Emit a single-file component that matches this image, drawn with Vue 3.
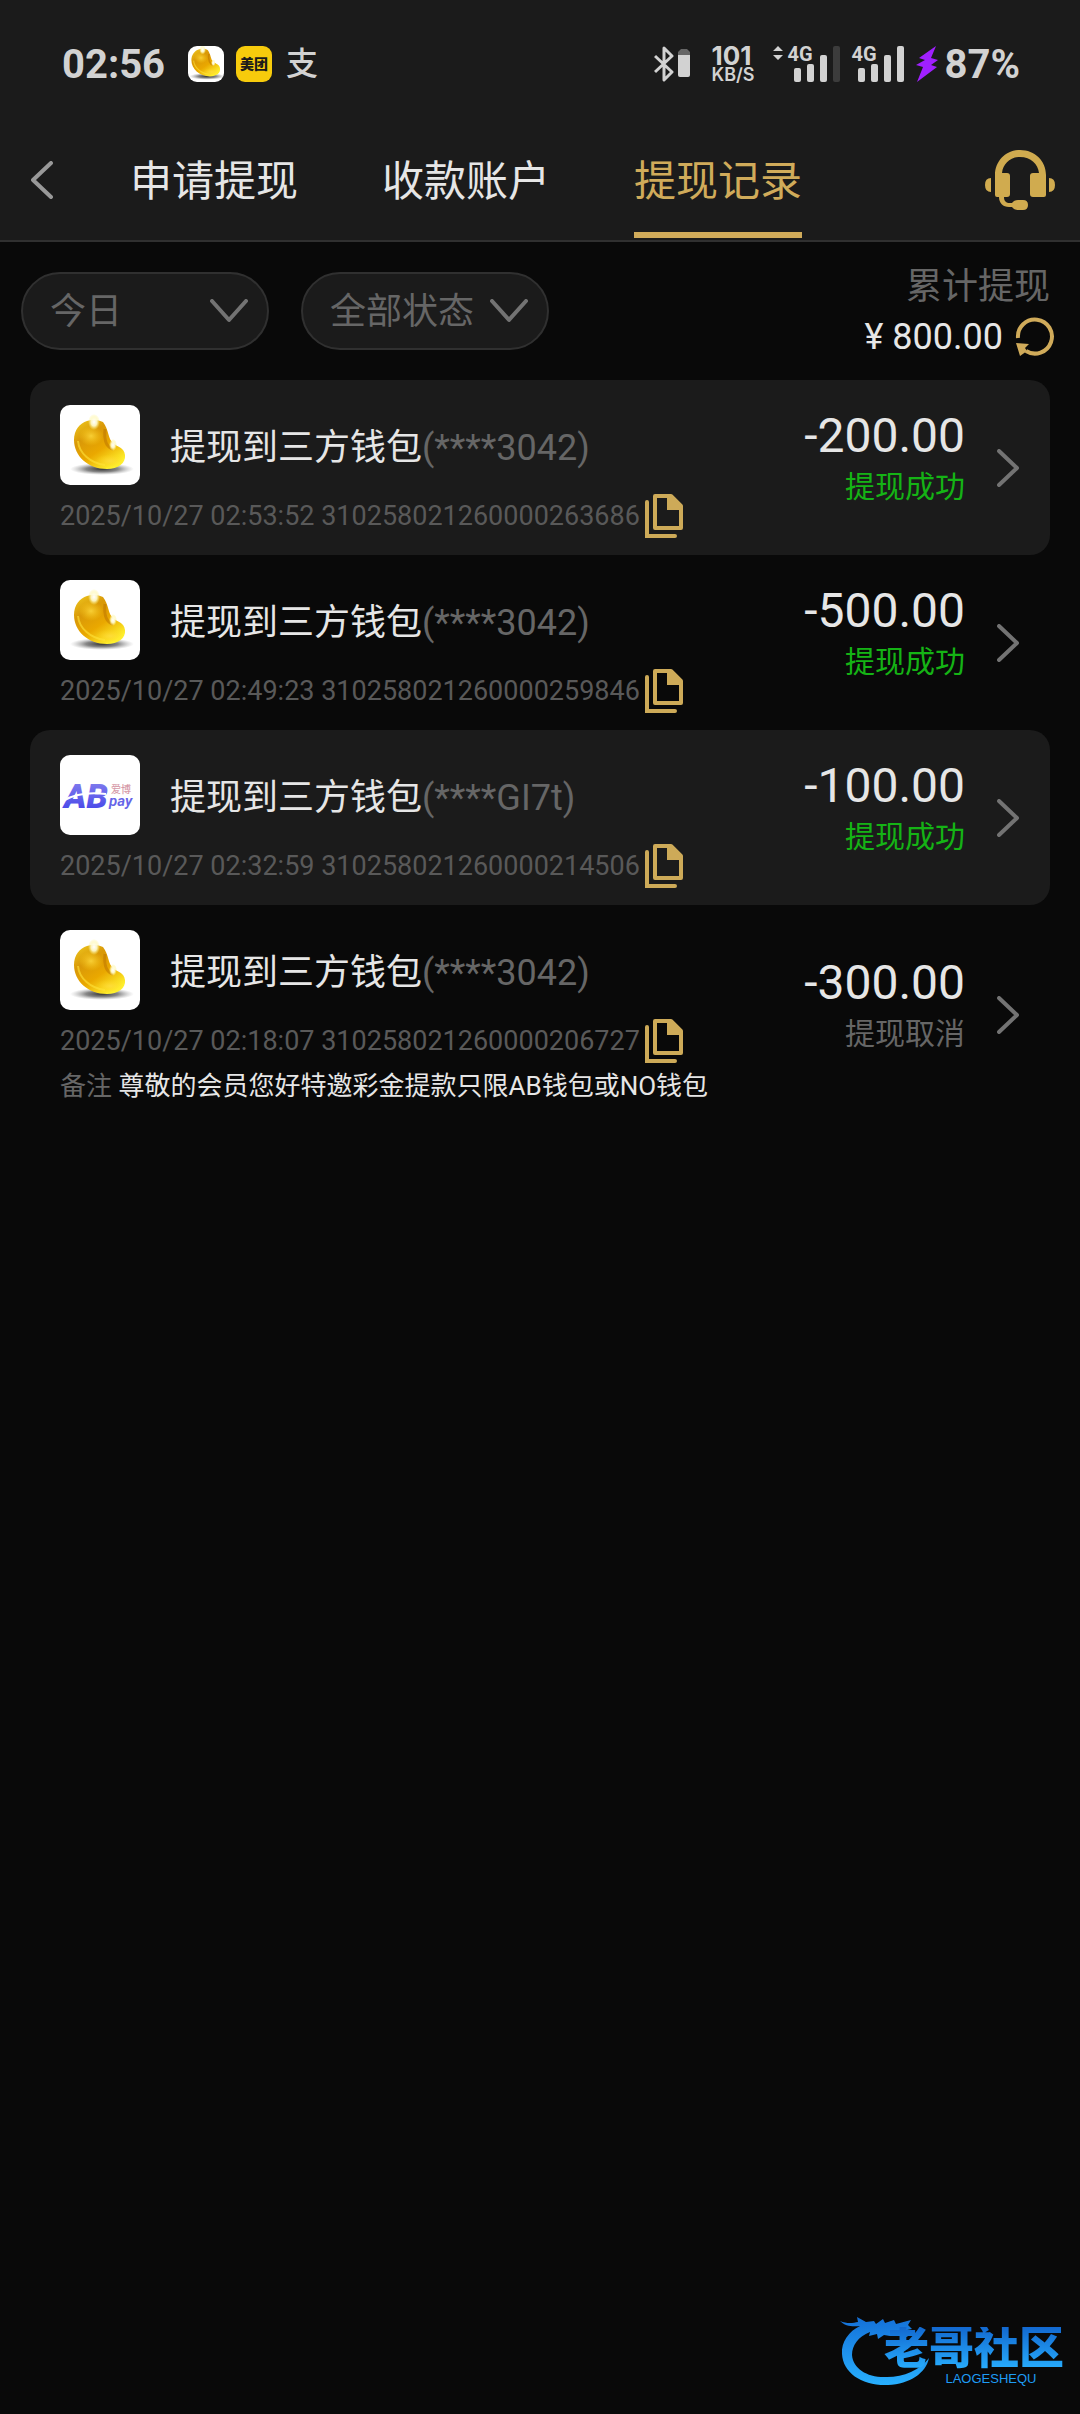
<script setup>
import { ref } from "vue";

const tabs = ["申请提现", "收款账户", "提现记录"];
const activeTab = ref("提现记录");

const dateRange = ref("今日");
const status = ref("全部状态");
const dateOptions = ["今日", "昨日", "近七日"];
const statusOptions = ["全部状态", "提现成功", "提现取消"];

const total = ref("800.00");

const records = ref([
  {
    id: "310258021260000263686",
    time: "2025/10/27 02:53:52",
    logo: "bean",
    account: "3042",
    amount: "-200.00",
    success: true,
  },
  {
    id: "310258021260000259846",
    time: "2025/10/27 02:49:23",
    logo: "bean",
    account: "3042",
    amount: "-500.00",
    success: true,
  },
  {
    id: "310258021260000214506",
    time: "2025/10/27 02:32:59",
    logo: "abpay",
    account: "GI7t",
    amount: "-100.00",
    success: true,
  },
  {
    id: "310258021260000206727",
    time: "2025/10/27 02:18:07",
    logo: "bean",
    account: "3042",
    amount: "-300.00",
    success: false,
    remark: "尊敬的会员您好特邀彩金提款只限AB钱包或NO钱包",
  },
]);

function copyId(id) {
  navigator.clipboard?.writeText(id);
}
</script>

<template>
  <div class="page">
    <!-- shared symbols -->
    <svg class="symbols" width="0" height="0" aria-hidden="true">
      <defs>
        <linearGradient id="beanFill" x1="0" y1="0" x2="0.7" y2="1">
          <stop offset="0" stop-color="#f0cc20" />
          <stop offset="0.35" stop-color="#d99808" />
          <stop offset="0.65" stop-color="#eaa800" />
          <stop offset="1" stop-color="#fff22e" />
        </linearGradient>
        <radialGradient id="beanGlow">
          <stop offset="0" stop-color="#ffdc40" stop-opacity="0.8" />
          <stop offset="1" stop-color="#ffd21a" stop-opacity="0" />
        </radialGradient>
        <radialGradient id="beanShine">
          <stop offset="0" stop-color="#ffffff" />
          <stop offset="0.5" stop-color="#fffbd0" stop-opacity="0.9" />
          <stop offset="1" stop-color="#fff27a" stop-opacity="0" />
        </radialGradient>
        <radialGradient id="beanShadow">
          <stop offset="0" stop-color="#333333" />
          <stop offset="0.5" stop-color="#555555" stop-opacity="0.7" />
          <stop offset="1" stop-color="#999999" stop-opacity="0" />
        </radialGradient>
        <linearGradient id="abFill" x1="0" y1="0" x2="0" y2="1">
          <stop offset="0" stop-color="#8c86ee" />
          <stop offset="1" stop-color="#3c3de8" />
        </linearGradient>
        <linearGradient id="dragonFill" x1="0" y1="0" x2="0" y2="1">
          <stop offset="0" stop-color="#1470d8" />
          <stop offset="1" stop-color="#28b0ff" />
        </linearGradient>
      </defs>
      <symbol id="bean" viewBox="0 0 80 80">
        <ellipse cx="42" cy="64" rx="32" ry="6" fill="url(#beanShadow)" />
        <path
          d="M27 16C20 18 14 25 14 35C14 51 28 64 47 64C58 64 66 58 65 50C64 42 57 42 53 38C48 34 49 25 43 17C39 15 32 14 27 16Z"
          fill="url(#beanFill)"
        />
        <ellipse cx="31" cy="31" rx="12" ry="10" fill="url(#beanGlow)" />
        <ellipse cx="50" cy="56" rx="15" ry="7" fill="url(#beanGlow)" />
        <path d="M18 36C19 48 30 58 45 60" fill="none" stroke="#ffe33a" stroke-width="2" opacity="0.6" />
        <path d="M45 24C44 34 45 42 53 44" fill="none" stroke="#b87000" stroke-width="3" opacity="0.5" />
        <ellipse cx="34" cy="17" rx="6" ry="8" fill="url(#beanShine)" />
        <ellipse cx="53" cy="40" rx="4" ry="6" fill="url(#beanShine)" />
      </symbol>
    </svg>

    <header class="topBar">
      <div class="statusBar">
        <div class="statusLeft">
          <span class="clock">02:56</span>
          <span class="appIcon"><svg viewBox="8 10 64 64"><use href="#bean" width="80" height="80" /></svg></span>
          <span class="appIcon meituan">美团</span>
          <span class="alipay">支</span>
        </div>
        <div class="statusRight">
          <svg class="bluetooth" viewBox="0 0 36 36" fill="none">
            <path d="M1 10L18 26L10 34V2L18 10L1 26" stroke="#d2d2d2" stroke-width="3" stroke-linejoin="round" />
            <path d="M24 9V6L27 3H33L36 6V9Z" fill="#666" />
            <path d="M24 9H36V29Q36 31 34 31H26Q24 31 24 29Z" fill="#d2d2d2" />
          </svg>
          <span class="speed"><b>101</b><small>KB/S</small></span>
          <span class="signal withArrows">
            <svg class="arrows" viewBox="0 0 10 14" fill="#d2d2d2"><path d="M5 0L10 5H0ZM5 14L0 9H10Z" /></svg>
            <span class="network">4G</span>
            <span class="bars"><i></i><i></i><i></i><i class="dim"></i></span>
          </span>
          <span class="signal">
            <span class="network">4G</span>
            <span class="bars"><i></i><i></i><i></i><i></i></span>
          </span>
          <svg class="bolt" viewBox="0 0 22 36" fill="#a020ff">
            <path d="M20 0L3 12L9 14L0 19L7 21L1 36L21 21L15 19L22 14L15 12Z" />
          </svg>
          <span class="battery">87%</span>
        </div>
      </div>

      <nav class="navBar">
        <button class="iconBtn" aria-label="返回">
          <svg class="back" viewBox="0 0 22 38" fill="none">
            <path d="M20 2L2 19L20 36" stroke="#999" stroke-width="4" stroke-linecap="round" stroke-linejoin="round" />
          </svg>
        </button>
        <div class="tabs">
          <button
            v-for="tab in tabs"
            :key="tab"
            class="tab"
            :class="{ active: tab === activeTab }"
            @click="activeTab = tab"
          >
            {{ tab }}
          </button>
        </div>
        <button class="iconBtn service" aria-label="客服">
          <svg class="headset" viewBox="0 0 70 60" fill="#d0ab4f">
            <path d="M10 45V25C10 11 21 0 35 0C50 0 61 11 61 25V45Q61 47 59 47H48Q45 47 45 44V26Q45 23 48 23H54C53 14 46 7 35 7C25 7 18 14 17 23H22Q25 23 25 26V44Q25 47 22 47H19C19 51 21 53 25 53H27Q29 50 33 50H38Q43 50 43 55Q43 60 38 60H33Q29 60 27 57H24C18 57 14 53 14 47H12Q10 47 10 45Z" />
            <path d="M6 28V42Q0 42 0 35Q0 28 6 28ZM64 28V42Q70 42 70 35Q70 28 64 28Z" />
          </svg>
        </button>
      </nav>
    </header>

    <section class="filters">
      <label class="filter">
        <select v-model="dateRange" aria-label="日期">
          <option v-for="item in dateOptions" :key="item">{{ item }}</option>
        </select>
        <svg class="down" viewBox="0 0 38 24" fill="none">
          <path d="M2 2L19 21L36 2" stroke="#737373" stroke-width="4" stroke-linecap="round" stroke-linejoin="round" />
        </svg>
      </label>
      <label class="filter">
        <select v-model="status" aria-label="状态">
          <option v-for="item in statusOptions" :key="item">{{ item }}</option>
        </select>
        <svg class="down" viewBox="0 0 38 24" fill="none">
          <path d="M2 2L19 21L36 2" stroke="#737373" stroke-width="4" stroke-linecap="round" stroke-linejoin="round" />
        </svg>
      </label>
      <div class="summary">
        <span class="summaryLabel">累计提现</span>
        <div class="summaryTotal">
          <span>¥ {{ total }}</span>
          <button class="iconBtn" aria-label="刷新">
            <svg class="refresh" viewBox="0 0 40 40">
              <path d="M3 21A17 17 0 1 1 11 34" fill="none" stroke="#d0ab5a" stroke-width="4" />
              <path d="M1 26L14 27L10 31L12 34L5 39Z" fill="#d0ab5a" />
            </svg>
          </button>
        </div>
      </div>
    </section>

    <ul class="records">
      <li v-for="item in records" :key="item.id" class="record">
        <div class="info">
          <div class="account">
            <svg v-if="item.logo === 'abpay'" class="logo" viewBox="0 0 80 80">
              <text x="4" y="53" class="abMark" fill="url(#abFill)">AB</text>
              <path d="M3 46C14 39 28 37 46 39" fill="none" stroke="#fff" stroke-width="2" />
              <text x="51" y="38" class="abName" fill="#d69aa8">爱博</text>
              <text x="49" y="51" class="abPay" fill="#6664e8">pay</text>
            </svg>
            <svg v-else class="logo" viewBox="0 0 80 80"><use href="#bean" /></svg>
            <p class="title">提现到三方钱包<span>(****{{ item.account }})</span></p>
          </div>
          <div class="order">
            <span>{{ item.time }} {{ item.id }}</span>
            <button class="iconBtn" aria-label="复制" @click="copyId(item.id)">
              <svg class="copy" viewBox="0 0 38 44" fill="none" stroke="#cdaa58">
                <path d="M2 8V42H30" stroke-width="4" stroke-linecap="round" />
                <path d="M10 2H26L36 12V34H10Z" stroke-width="4" stroke-linejoin="round" />
                <path d="M22 2H26L36 12V16H22Z" fill="#cdaa58" stroke="none" />
              </svg>
            </button>
          </div>
          <p v-if="item.remark" class="remark"><span>备注</span> {{ item.remark }}</p>
        </div>
        <div class="result">
          <span class="amount">{{ item.amount }}</span>
          <span class="state" :class="{ success: item.success }">
            {{ item.success ? "提现成功" : "提现取消" }}
          </span>
        </div>
        <button class="iconBtn" aria-label="详情">
          <svg class="next" viewBox="0 0 22 38" fill="none">
            <path d="M2 2L20 19L2 36" stroke="#737373" stroke-width="4" stroke-linecap="round" stroke-linejoin="round" />
          </svg>
        </button>
      </li>
    </ul>

    <div class="watermark">
      <svg class="dragon" viewBox="0 0 104 70" fill="url(#dragonFill)">
        <path d="M0 4C7 7 13 6 18 5L17 0L26 5L34 4L36 7L43 2L45 6L54 3L56 7L71 3L68 8L72 12L62 14L70 16L67 20L58 17L50 19L44 18L38 22L37 17L29 19L30 15C18 20 12 28 12 38C13 52 28 61 47 60C64 60 80 53 89 41C86 56 70 67 48 68C22 69 3 56 2 37C1 25 9 14 20 9C12 10 5 9 0 4Z" />
      </svg>
      <div class="brand">
        <strong>老哥社区</strong>
        <small>LAOGESHEQU</small>
      </div>
    </div>
  </div>
</template>

<style>
body {
  background: #090909;
}
</style>

<style scoped>
.page {
  min-height: 100vh;
  position: relative;
  background: #090909;
  color: #e6e6e6;
  font-family: Roboto, "Noto Sans CJK SC", sans-serif;
}

.symbols {
  position: absolute;
}

svg {
  display: block;
}

.iconBtn {
  padding: 0;
  border: none;
  background: none;
  cursor: pointer;
}

.topBar {
  background: #1b1b1b;
  border-bottom: 2px solid #303030;
}

/* status bar */
.statusBar {
  display: flex;
  justify-content: space-between;
  align-items: center;
  height: 120px;
  padding: 8px 60px 0 62px;
  box-sizing: border-box;
  color: #d2d2d2;
  font-family: Inter, "Noto Sans CJK SC", sans-serif;
}

.statusLeft,
.statusRight {
  display: flex;
  align-items: center;
}

.statusLeft {
  gap: 12px;
}

.clock {
  margin-right: 11px;
  font-family: Roboto, sans-serif;
  font-size: 40px;
  font-weight: 700;
}

.appIcon {
  width: 36px;
  height: 36px;
  border-radius: 9px;
  background: #fff;
  overflow: hidden;
}

.meituan {
  background: #f7cb0c;
  color: #1b1b1b;
  font-size: 14px;
  font-weight: 900;
  line-height: 36px;
  text-align: center;
}

.alipay {
  margin-left: 2px;
  font-size: 32px;
  font-weight: 500;
  line-height: 36px;
}

.bluetooth {
  width: 36px;
  height: 36px;
  margin-right: 21px;
}

.speed {
  display: flex;
  flex-direction: column;
  margin-right: 18px;
}

.speed b {
  font-size: 26px;
  line-height: 22px;
}

.speed small {
  font-size: 18px;
  font-weight: 600;
  line-height: 16px;
}

.signal {
  display: grid;
  height: 36px;
  margin-right: 12px;
}

.withArrows {
  grid-template-columns: 15px auto;
}

.arrows {
  width: 10px;
  height: 14px;
}

.network {
  grid-row: 1;
  font-family: "Liberation Sans Narrow", Roboto, sans-serif;
  font-size: 20px;
  font-weight: 700;
  line-height: 16px;
}

.arrows,
.bars {
  grid-row: 1;
}

.network,
.bars {
  grid-column: -2;
}

.bars {
  display: flex;
  align-items: flex-end;
  gap: 6px;
  height: 36px;
  padding-left: 6px;
}

.bars i {
  width: 7px;
  height: 14px;
  border-radius: 2px;
  background: #d2d2d2;
}

.bars i:nth-child(2) {
  height: 18px;
}

.bars i:nth-child(3) {
  height: 27px;
}

.bars i:nth-child(4) {
  height: 36px;
}

.bars .dim {
  background: #3c3c3c;
}

.bolt {
  width: 22px;
  height: 36px;
  margin-right: 7px;
}

.battery {
  font-family: Roboto, sans-serif;
  font-size: 40px;
  font-weight: 700;
}

/* navigation */
.navBar {
  display: flex;
  align-items: center;
  height: 120px;
  padding: 0 25px 0 31px;
}

.back,
.next {
  width: 22px;
  height: 38px;
}

.tabs {
  display: flex;
  gap: 84px;
  margin-left: 77px;
}

.tab {
  height: 116px;
  padding: 10px 0 0;
  border: none;
  border-bottom: 6px solid transparent;
  background: none;
  color: #e6e6e6;
  font-family: inherit;
  font-size: 42px;
  line-height: 60px;
  white-space: nowrap;
  box-sizing: border-box;
}

.tab.active {
  border-bottom-color: #d0ab5a;
  color: #d0ab5a;
}

.service {
  margin-left: auto;
}

.headset {
  width: 70px;
  height: 60px;
}

/* filters */
.filters {
  display: flex;
  align-items: center;
  gap: 32px;
  height: 138px;
  padding: 0 25px 0 21px;
}

.filter {
  position: relative;
  flex: 0 1 248px;
}

.filter select {
  width: 100%;
  height: 78px;
  padding: 2px 60px 0 27px;
  border: 2px solid #303030;
  border-radius: 39px;
  background: #1b1b1b;
  color: #666;
  font-family: inherit;
  font-size: 36px;
  appearance: none;
}

.down {
  position: absolute;
  top: 27px;
  right: 21px;
  width: 38px;
  height: 24px;
  pointer-events: none;
}

.summary {
  display: flex;
  flex-direction: column;
  align-items: flex-end;
  margin-left: auto;
  padding-top: 2px;
  font-size: 36px;
  line-height: 50px;
}

.summaryLabel {
  padding-right: 5px;
  color: #666;
}

.summaryTotal {
  display: flex;
  align-items: center;
  gap: 12px;
}

.refresh {
  width: 40px;
  height: 40px;
}

/* records */
.records {
  margin: 0 30px;
  padding: 0;
  list-style: none;
}

.record {
  display: flex;
  align-items: center;
  padding: 0 31px 0 30px;
  border-radius: 20px;
}

.record:nth-child(odd) {
  background: #1b1b1b;
}

.info {
  flex: 1;
  padding: 25px 0 8px;
}

.account {
  display: flex;
  align-items: center;
  gap: 30px;
}

.logo {
  width: 80px;
  height: 80px;
  border-radius: 10px;
  background: #fff;
}

.abMark {
  font: italic 900 34px Roboto, sans-serif;
}

.abName {
  font: 500 10px "Noto Sans CJK SC", sans-serif;
}

.abPay {
  font: italic 600 15px Roboto, sans-serif;
}

.title {
  margin: 0;
  padding-top: 5px;
  font-size: 36px;
  line-height: 54px;
}

.title span {
  color: #666;
}

.order {
  display: flex;
  align-items: center;
  gap: 5px;
  height: 62px;
  color: #595959;
  font-size: 27px;
}

.copy {
  width: 38px;
  height: 44px;
}

.remark {
  margin: 0 0 17px;
  font-size: 26px;
  line-height: 28px;
}

.remark span {
  color: #666;
}

.result {
  display: flex;
  flex-direction: column;
  align-items: flex-end;
  margin-right: 32px;
  padding-bottom: 18px;
}

.amount {
  font-size: 48px;
  line-height: 56px;
}

.state {
  color: #666;
  font-size: 30px;
  line-height: 46px;
}

.state.success {
  color: #15b315;
}

/* watermark over the page corner */
.watermark {
  position: absolute;
  right: 16px;
  bottom: 27px;
  display: flex;
  align-items: flex-end;
}

.dragon {
  width: 104px;
  height: 70px;
}

.brand {
  display: flex;
  flex-direction: column;
  align-items: center;
  margin-left: -60px;
  color: #1e9cf5;
}

.brand strong {
  background: linear-gradient(#1268d0, #28b0ff);
  background-clip: text;
  color: transparent;
  font-size: 45px;
  font-weight: 900;
  line-height: 44px;
}

.brand small {
  padding-left: 34px;
  font-family: "Liberation Sans", sans-serif;
  font-size: 13px;
  line-height: 16px;
}
</style>
